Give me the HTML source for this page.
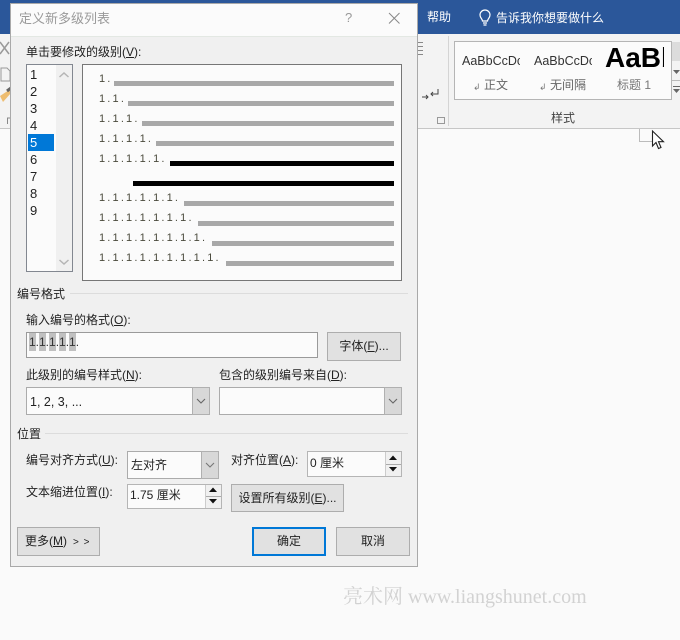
<!DOCTYPE html>
<html><head><meta charset="utf-8">
<style>
html,body{margin:0;padding:0;width:680px;height:640px;overflow:hidden;background:#fafafa}
body{position:relative;font-family:"Liberation Sans","Noto Sans CJK SC",sans-serif;font-size:12px;color:#222}
div,span.a,svg{position:absolute}
.t{white-space:nowrap;line-height:16px;height:16px}
u{text-decoration:underline}
.box{box-sizing:border-box;background:#fbfbfb;border:1px solid #a0a0a0}
.btn{box-sizing:border-box;background:#e1e1e1;border:1px solid #adadad;text-align:center;white-space:nowrap}
.arrow{box-sizing:border-box;background:#d8d8d8;border:1px solid #b0b0b0}
.bar{height:5px;background:#a8a8a8;right:286px}
.num{left:99px;font-size:11px;letter-spacing:-.44px;color:#4a4a3c;white-space:pre;line-height:14px;height:14px;font-family:"Liberation Sans",sans-serif}
.li{left:30px;font-size:13px;line-height:17px;height:17px;color:#222}
</style></head><body>
<!-- ribbon -->
<div style="left:0;top:0;width:680px;height:34px;background:#2b579a"></div>
<div style="left:0;top:34px;width:680px;height:94px;background:#f3f3f3"></div>
<div style="left:0;top:128px;width:680px;height:1px;background:#c6c6c6"></div>
<div class="t" style="left:427px;top:9px;color:#fff;font-size:12px">帮助</div>
<svg style="left:477px;top:9px" width="16" height="18" viewBox="0 0 16 18" fill="none" stroke="#fff" stroke-width="1.2"><path d="M5.500 12c0-2-2.500-3-2.500-6a5 5 0 0 1 10 0c0 3-2.500 4-2.500 6z"/><path d="M6 14h4M6.500 16h3"/></svg>
<div class="t" style="left:496px;top:10px;color:#fff;font-size:12px">告诉我你想要做什么</div>
<div style="left:448px;top:36px;width:1px;height:90px;background:#d4d4d4"></div>
<svg style="left:418px;top:38px" width="30" height="90" viewBox="0 0 30 90" fill="none" stroke="#555" stroke-width="1"><path d="M0 4.500h5M0 8.500h5M0 12.500h5M0 16.500h5" stroke="#888"/><path d="M20 51v5h-7M15 54l-2 2 2 2M10 59h-6M8 57l2 2-2 2" stroke="#444"/><path d="M19.500 79.500h7v6h-7z" stroke="#999"/></svg>
<!-- gallery -->
<div class="box" style="left:454px;top:41px;width:218px;height:59px;background:#fbfbfb;border-color:#b5b5b5"></div>
<div class="t" style="left:462px;top:53px;width:58px;overflow:hidden;font-size:12.500px;color:#333">AaBbCcDc</div>
<div class="t" style="left:534px;top:53px;width:58px;overflow:hidden;font-size:12.500px;color:#333">AaBbCcDc</div>
<div style="left:605px;top:40px;width:59px;height:36px;overflow:hidden;font-size:28px;font-weight:bold;line-height:36px;color:#000;white-space:nowrap">AaBb</div>
<div class="t" style="left:484px;top:77px;color:#666">正文</div>
<div class="t" style="left:550px;top:77px;color:#666">无间隔</div>
<div class="t" style="left:617px;top:77px;color:#777">标题 1</div>
<div class="t" style="left:473px;top:79px;color:#777;font-size:9px">↲</div>
<div class="t" style="left:539px;top:79px;color:#777;font-size:9px">↲</div>
<div style="left:672px;top:42px;width:8px;height:19px;background:#dcdcdc"></div>
<div style="left:672px;top:80px;width:8px;height:1px;background:#bbb"></div>
<svg style="left:673px;top:66px" width="7" height="30" viewBox="0 0 7 30" fill="#666"><path d="M0 4h7L3.500 8zM0 20h7v1H0zM0 23h7L3.500 27z"/></svg>
<div class="t" style="left:551px;top:110px;color:#444">样式</div>
<!-- cursor -->
<div style="left:639px;top:129px;width:14px;height:13px;box-sizing:border-box;border:1px solid #bbb;border-top:0;border-right:0"></div>
<svg style="left:650px;top:129px" width="16" height="22" viewBox="0 0 16 22"><path d="M2.500 2v15l3.500-3.500 2.500 6 2.500-1-2.500-5.800h5z" fill="#fff" stroke="#222" stroke-width="1.100"/></svg>
<!-- left ribbon bits -->
<svg style="left:0;top:40px" width="11" height="90" viewBox="0 0 11 90" fill="none"><path d="M0 2l9 12M9 2L0 14" stroke="#999" stroke-width="1.500"/><path d="M1 28h6l3 3v10H1z" stroke="#999"/><path d="M0 56l9-6 2 3-8 9z" fill="#eebd70"/><path d="M7 51l4-3" stroke="#666" stroke-width="3"/><path d="M7.500 84v-6h3" stroke="#888"/></svg>

<!-- dialog -->
<div style="left:10px;top:3px;width:408px;height:564px;box-sizing:border-box;background:#f0f0f0;border:1px solid #a9a9a9"></div>
<div style="left:11px;top:4px;width:406px;height:32px;background:#fbfbfb;border-bottom:1px solid #e3e8e3"></div>
<div class="t" style="left:19px;top:11px;font-size:13px;color:#9a9a9a">定义新多级列表</div>
<div class="t" style="left:345px;top:10px;font-size:13px;color:#999">?</div>
<svg style="left:388px;top:12px" width="13" height="13" viewBox="0 0 13 13" stroke="#888" fill="none"><path d="M1 1l10.500 10.500M11.500 1L1 11.500"/></svg>

<div class="t" style="left:26px;top:44px;color:#222">单击要修改的级别(<u>V</u>):</div>

<!-- list -->
<div class="box" style="left:26px;top:64px;width:47px;height:208px;border-color:#828790"></div>
<div style="left:56px;top:65px;width:16px;height:206px;background:#f0f0f0"></div>
<svg style="left:58px;top:71px" width="12" height="8" viewBox="0 0 12 8" fill="none" stroke="#b5b5b5" stroke-width="1.500"><path d="M1.500 6L6 2l4.500 4"/></svg>
<svg style="left:58px;top:258px" width="12" height="8" viewBox="0 0 12 8" fill="none" stroke="#b5b5b5" stroke-width="1.500"><path d="M1.500 2L6 6l4.500-4"/></svg>
<div style="left:28px;top:134px;width:26px;height:17px;background:#0078d7"></div>
<div class="li" style="top:66px">1</div>
<div class="li" style="top:83px">2</div>
<div class="li" style="top:100px">3</div>
<div class="li" style="top:117px">4</div>
<div class="li" style="top:134px;color:#fff">5</div>
<div class="li" style="top:151px">6</div>
<div class="li" style="top:168px">7</div>
<div class="li" style="top:185px">8</div>
<div class="li" style="top:202px">9</div>

<!-- preview -->
<div class="box" style="left:82px;top:64px;width:320px;height:217px;border-color:#767676"></div>
<div class="num" style="top:72px">1 .</div>
<div class="num" style="top:92px">1 . 1 .</div>
<div class="num" style="top:112px">1 . 1 . 1 .</div>
<div class="num" style="top:132px">1 . 1 . 1 . 1 .</div>
<div class="num" style="top:152px">1 . 1 . 1 . 1 . 1 .</div>
<div class="num" style="top:191px">1 . 1 . 1 . 1 . 1 . 1 .</div>
<div class="num" style="top:211px">1 . 1 . 1 . 1 . 1 . 1 . 1 .</div>
<div class="num" style="top:231px">1 . 1 . 1 . 1 . 1 . 1 . 1 . 1 .</div>
<div class="num" style="top:251px">1 . 1 . 1 . 1 . 1 . 1 . 1 . 1 . 1 .</div>
<div class="bar" style="left:114px;top:81px"></div>
<div class="bar" style="left:128px;top:101px"></div>
<div class="bar" style="left:142px;top:121px"></div>
<div class="bar" style="left:156px;top:141px"></div>
<div class="bar" style="left:170px;top:161px;background:#000"></div>
<div class="bar" style="left:133px;top:181px;background:#000"></div>
<div class="bar" style="left:184px;top:201px"></div>
<div class="bar" style="left:198px;top:221px"></div>
<div class="bar" style="left:212px;top:241px"></div>
<div class="bar" style="left:226px;top:261px"></div>

<!-- 编号格式 -->
<div class="t" style="left:17px;top:286px;color:#222">编号格式</div>
<div style="left:70px;top:293px;width:338px;height:1px;background:#dcdcdc"></div>
<div class="t" style="left:26px;top:312px">输入编号的格式(<u>O</u>):</div>
<div class="box" style="left:26px;top:332px;width:292px;height:26px;border-color:#9a9a9a"></div>
<div style="left:29px;top:333px;width:7px;height:18px;background:#c0c0c0"></div>
<div style="left:39px;top:333px;width:7px;height:18px;background:#c0c0c0"></div>
<div style="left:49px;top:333px;width:7px;height:18px;background:#c0c0c0"></div>
<div style="left:59px;top:333px;width:7px;height:18px;background:#c0c0c0"></div>
<div style="left:69px;top:333px;width:7px;height:18px;background:#c0c0c0"></div>
<div class="t" style="left:29px;top:334px;font-size:12px;color:#333">1.1.1.1.1.</div>
<div class="btn" style="left:327px;top:332px;width:74px;height:29px;line-height:27px;background:#e1e1e1">字体(<u>F</u>)...</div>

<div class="t" style="left:26px;top:367px">此级别的编号样式(<u>N</u>):</div>
<div class="t" style="left:219px;top:367px">包含的级别编号来自(<u>D</u>):</div>
<div class="box" style="left:26px;top:387px;width:184px;height:28px;border-color:#ababab"></div>
<div class="arrow" style="left:192px;top:387px;width:18px;height:28px"></div>
<svg style="left:195px;top:397px" width="12" height="8" viewBox="0 0 12 8" fill="none" stroke="#666" stroke-width="1.100"><path d="M2 2l4 4 4-4"/></svg>
<div class="t" style="left:30px;top:394px;font-size:12.500px">1, 2, 3, ...</div>
<div class="box" style="left:219px;top:387px;width:183px;height:28px;border-color:#ababab"></div>
<div class="arrow" style="left:384px;top:387px;width:18px;height:28px"></div>
<svg style="left:387px;top:397px" width="12" height="8" viewBox="0 0 12 8" fill="none" stroke="#666" stroke-width="1.100"><path d="M2 2l4 4 4-4"/></svg>

<!-- 位置 -->
<div class="t" style="left:17px;top:426px">位置</div>
<div style="left:45px;top:433px;width:363px;height:1px;background:#dcdcdc"></div>
<div class="t" style="left:26px;top:452px">编号对齐方式(<u>U</u>):</div>
<div class="box" style="left:127px;top:451px;width:92px;height:28px;border-color:#ababab"></div>
<div class="arrow" style="left:201px;top:451px;width:18px;height:28px"></div>
<svg style="left:204px;top:461px" width="12" height="8" viewBox="0 0 12 8" fill="none" stroke="#777" stroke-width="1.100"><path d="M2 2l4 4 4-4"/></svg>
<div class="t" style="left:131px;top:457px">左对齐</div>
<div class="t" style="left:231px;top:452px">对齐位置(<u>A</u>):</div>
<div class="box" style="left:307px;top:451px;width:95px;height:26px;border-color:#b5b5b5"></div>
<div class="t" style="left:310px;top:455px">0 厘米</div>
<div style="left:385px;top:452px;width:16px;height:24px;background:#f0f0f0;border-left:1px solid #ccc;box-sizing:border-box"></div>
<div style="left:386px;top:464px;width:15px;height:1px;background:#aaa"></div>
<svg style="left:388px;top:455px" width="10" height="19" viewBox="0 0 10 19" fill="#111"><path d="M5 0.500l4 4.500H1zM1 12h8l-4 4.500z"/></svg>
<div class="t" style="left:26px;top:484px">文本缩进位置(<u>I</u>):</div>
<div class="box" style="left:127px;top:484px;width:95px;height:25px;border-color:#b5b5b5"></div>
<div class="t" style="left:130px;top:487px">1.75 厘米</div>
<div style="left:205px;top:485px;width:16px;height:23px;background:#f0f0f0;border-left:1px solid #ccc;box-sizing:border-box"></div>
<div style="left:206px;top:496px;width:15px;height:1px;background:#aaa"></div>
<svg style="left:208px;top:487px" width="10" height="19" viewBox="0 0 10 19" fill="#111"><path d="M5 0.500l4 4.500H1zM1 12h8l-4 4.500z"/></svg>
<div class="btn" style="left:231px;top:484px;width:113px;height:28px;line-height:26px">设置所有级别(<u>E</u>)...</div>

<!-- bottom buttons -->
<div class="btn" style="left:17px;top:527px;width:83px;height:29px;line-height:27px;text-align:left;padding-left:7px">更多(<u>M</u>)<span style="font-size:10px;margin-left:6px;letter-spacing:1px">&gt; &gt;</span></div>
<div class="btn" style="left:252px;top:527px;width:74px;height:29px;line-height:25px;border:2px solid #0078d7">确定</div>
<div class="btn" style="left:336px;top:527px;width:74px;height:29px;line-height:27px">取消</div>

<!-- watermark -->
<div class="t" style="left:343px;top:586px;height:22px;line-height:22px;font-family:'Liberation Serif','Noto Serif CJK SC',serif;font-size:20px;color:#d2d2d2">亮术网 www.liangshunet.com</div>
</body></html>
